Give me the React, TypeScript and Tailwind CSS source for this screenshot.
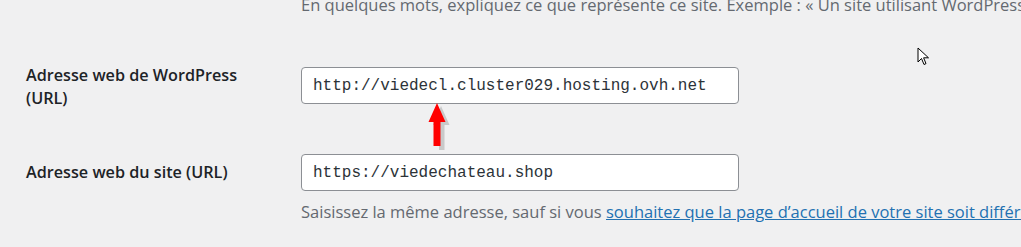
import React from "react";

const sans = { fontFamily: '"Open Sans", "Noto Sans", sans-serif' };

function UrlField({ value }: { value: string }) {
	return (
		<input
			type="text"
			readOnly
			value={value}
			className="h-[37px] w-[438px] rounded-[4px] border border-[#8c8f94] bg-white px-[11px] text-[16px] text-[#2c3338] outline-none [font-family:'Liberation_Mono',monospace]"
		/>
	);
}

function Arrow() {
	return (
		<svg className="absolute left-[426px] top-[102px]" width="26" height="48" viewBox="0 0 26 48">
			<path d="M13 2 L21.5 21 L16.5 21 L16.5 46 L11 46 L11 21 L5 21 Z" fill="#9a9a9a" opacity="0.45" transform="translate(2 2)" />
			<path d="M11 1 L19.5 20 L14.5 20 L14.5 44 L7.5 44 L7.5 20 L2.5 20 Z" fill="#ff0000" />
		</svg>
	);
}

function Cursor() {
	return (
		<svg className="absolute left-[917px] top-[47px]" width="14" height="20" viewBox="0 0 14 20">
			<path d="M1 1 L1 15 L4.5 11.5 L7 17.5 L9 16.6 L6.6 10.8 L11.5 10.8 Z" fill="#ffffff" stroke="#000000" strokeWidth="1" strokeLinejoin="miter" />
		</svg>
	);
}

export default function App() {
	return (
		<div className="relative h-[247px] w-[1021px] overflow-hidden bg-[#f0f0f1] text-[#1d2327]" style={sans}>
			<div className="pl-[301px] -mt-[7px] whitespace-nowrap text-[16.5px] leading-[24px] text-[#646970]">
				En quelques mots, expliquez ce que représente ce site. Exemple : « Un site utilisant WordPress »
			</div>

			<div className="mt-[50px] flex pl-[26px]">
				<label className="w-[275px] -mt-[3px] text-[16.2px] font-semibold leading-[23px]">
					Adresse web de WordPress
					<br />
					(URL)
				</label>
				<UrlField value="http://viedecl.cluster029.hosting.ovh.net" />
			</div>

			<div className="mt-[44px] flex items-center pl-[26px]">
				<label className="w-[275px] text-[16.2px] font-semibold leading-[23px]">Adresse web du site (URL)</label>
				<UrlField value="https://viedechateau.shop" />
			</div>

			<div className="mt-[9px] whitespace-nowrap pl-[301px] text-[16.5px] leading-[24px] text-[#646970]">
				Saisissez la même adresse, sauf si vous{" "}
				<a href="#" className="text-[#2271b1] underline">
					souhaitez que la page d’accueil de votre site soit différente du dossier d’installation de WordPress
				</a>
				.
			</div>

			<Arrow />
			<Cursor />
		</div>
	);
}
